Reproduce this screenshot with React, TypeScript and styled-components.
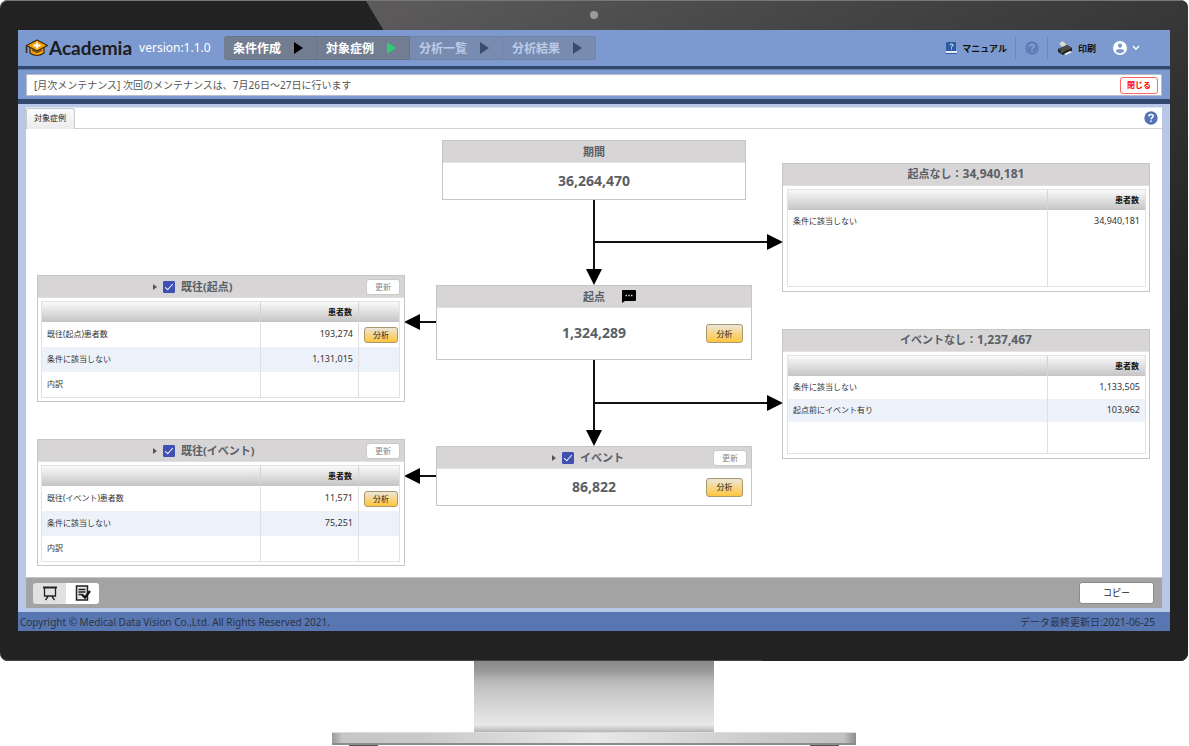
import React from "react";
import styled, { createGlobalStyle, css } from "styled-components";

const GlobalStyle = createGlobalStyle`
  *, *::before, *::after { box-sizing: border-box; }
  body {
    margin: 0;
    background: #fff;
    color: #333;
    font-family: "Noto Sans", "Noto Sans CJK JP", sans-serif;
    font-size: 10px;
    line-height: 1.2;
  }
  button, input { font-family: inherit; margin: 0; }
  button { cursor: pointer; padding: 0; }
  svg { display: block; flex: none; }
`;

/* ---------- monitor ---------- */

const Monitor = styled.div`
  min-width: 1160px;
  padding-right: 1px;
`;

const Bezel = styled.div`
  position: relative;
  padding: 30px 18px;
  border-radius: 8px;
  background: #222;
  overflow: hidden;
  box-shadow: inset 0 1px 0 #777, inset 0 -1px 0 #444;
`;

const Reflection = styled.div`
  position: absolute;
  inset: 1px 0 0 0;
  clip-path: polygon(366px 0, 100% 0, 100% 100%, 762px 100%);
  background: linear-gradient(
    to bottom right,
    #5c5a5a 17%,
    #504f4f 27%,
    #454444 37%,
    #383838 50%,
    #282828 66%,
    #222 74%
  );
`;

const Camera = styled.div`
  position: absolute;
  top: 11px;
  left: 50%;
  width: 8px;
  height: 8px;
  margin-left: -4px;
  border-radius: 50%;
  background: #9a9a9a;
`;

const Screen = styled.div`
  position: relative;
  display: flex;
  flex-direction: column;
  background: #b8c6e8;
`;

const Stand = styled.div`
  display: flex;
  flex-direction: column;
  align-items: center;
`;

const Neck = styled.div`
  width: 240px;
  height: 71px;
  background: linear-gradient(#888 0, #999 10px, #b8b8b8 20px, #c8c9c8 32px, #e8e8e8 64px, #b4b4b4 71px);
`;

const Base = styled.div`
  width: 524px;
  height: 13px;
  border-top: 1px solid #ddd;
  border-bottom: 2px solid #8c8c8c;
  background: linear-gradient(90deg, #999 0, #c6c6c6 10px, #c8c9c8 90px, #e8e8e8 50%, #c8c9c8 440px, #c2c2c2 512px, #8c8c8c 100%);
`;

const Feet = styled.div`
  display: flex;
  justify-content: space-between;
  width: 490px;
`;

const Foot = styled.div`
  width: 29px;
  height: 1px;
  background: #555;
`;

/* ---------- header ---------- */

const Header = styled.header`
  display: flex;
  align-items: center;
  height: 39px;
  padding: 0 22px 0 7px;
  border-bottom: 3px solid #33486d;
  background: #7c9ad0;
`;

const Logo = styled.a`
  display: flex;
  align-items: center;
  color: #1e1c20;
  font-family: Lato, sans-serif;
  font-size: 19px;
  font-weight: 700;
  line-height: 24px;
  text-decoration: none;
`;

const Version = styled.span`
  width: 92px;
  padding-left: 7px;
  color: #fff;
  font-size: 12px;
`;

const Steps = styled.nav`
  display: flex;
  height: 24px;
  border-radius: 3px;
  overflow: hidden;
`;

const Step = styled.button<{ $muted?: boolean }>`
  display: flex;
  align-items: center;
  gap: 13px;
  width: 93px;
  padding-left: 9px;
  border: 1px solid ${(p) => (p.$muted ? "#7183a9" : "#67748c")};
  border-left-width: 0;
  background: ${(p) => (p.$muted ? "#788bb1" : "#727d92")};
  color: ${(p) => (p.$muted ? "#bccbe8" : "#fff")};
  font-size: 12px;
  font-weight: 700;
  white-space: nowrap;
`;

const Tools = styled.div`
  display: flex;
  align-items: center;
  height: 22px;
  margin-left: auto;
`;

const Tool = styled.button<{ $divided?: boolean }>`
  display: flex;
  align-items: center;
  gap: 5px;
  height: 22px;
  padding: 0 8px 0 9px;
  border: 0;
  border-right: ${(p) => (p.$divided ? "1px solid #6c88be" : "0")};
  background: none;
  color: #111;
  font-size: 9px;
  font-weight: 700;
  white-space: nowrap;
`;

/* ---------- notice ---------- */

const NoticeBand = styled.div`
  padding: 4px 8px 3px;
  border-top: 1px solid #5c79ad;
  border-bottom: 5px solid #33486d;
  background: #7c9ad0;
`;

const Notice = styled.div`
  display: flex;
  align-items: center;
  justify-content: space-between;
  height: 22px;
  padding: 0 3px 0 7px;
  border: 1px solid #b9bccb;
  background: #fff;
  color: #555;
  font-size: 10px;
`;

const CloseButton = styled.button`
  width: 38px;
  height: 17px;
  padding-bottom: 2px;
  border: 1px solid #f66;
  border-radius: 3px;
  background: #fff;
  color: #f00;
  font-size: 8px;
  font-weight: 700;
`;

/* ---------- panel ---------- */

const Panel = styled.main`
  margin: 3px 8px 4px;
  border-top: 1px solid #dfe6f6;
  background: #fff;
`;

const TabBar = styled.div`
  display: flex;
  justify-content: space-between;
  height: 21px;
  padding-right: 4px;
  border-bottom: 1px solid #d2d2d2;
`;

const Tab = styled.button`
  width: 49px;
  height: 21px;
  padding: 0 1px 4px 0;
  border: 1px solid #c9c9c9;
  border-bottom: 0;
  border-radius: 3px 3px 0 0;
  background: linear-gradient(#fbfbfb, #ebebeb);
  color: #222;
  font-size: 8px;
`;

const IconButton = styled.button`
  display: flex;
  align-items: center;
  border: 0;
  background: none;
`;

const Canvas = styled.div`
  position: relative;
  height: 448px;
`;

type Side = "left" | "center" | "right";

const sideStyles = {
  left: css`
    left: 11px;
    width: 368px;
  `,
  center: css<{ $wide?: boolean }>`
    left: 50%;
    transform: translateX(-50%);
    width: ${(p) => (p.$wide ? 316 : 304)}px;
  `,
  right: css`
    right: 12px;
    width: 368px;
  `,
};

const Node = styled.section<{ $side: Side; $top: number; $height: number; $wide?: boolean }>`
  position: absolute;
  top: ${(p) => p.$top}px;
  height: ${(p) => p.$height}px;
  display: flex;
  flex-direction: column;
  border: 1px solid #c6c6c6;
  background: #fff;
  ${(p) => sideStyles[p.$side]}
`;

const titleText = css`
  height: 22px;
  flex: none;
  align-items: center;
  border-bottom: 1px solid #e2e2e2;
  background: #d7d5d6;
  color: #5a5f66;
  font-size: 11px;
  font-weight: 700;
  white-space: nowrap;
`;

const CenterTitle = styled.div`
  display: grid;
  grid-template-columns: 1fr auto 1fr;
  ${titleText}
  > :first-child { grid-column: 2; }
  svg { margin-left: 17px; }
`;

const Count = styled.span`
  font-size: 12px;
`;

const ToggleTitle = styled.div`
  display: flex;
  padding: 0 4px 0 115px;
  ${titleText}
`;

const ToggleLabel = styled.label`
  display: flex;
  align-items: center;
  gap: 6px;
  margin-left: 6px;
`;

const Checkbox = styled.input.attrs({ type: "checkbox" })`
  appearance: none;
  position: relative;
  width: 12px;
  height: 12px;
  border: 1px solid #3f51b5;
  border-radius: 1px;
  background: #fff;
  &:checked { background: #3f51b5; }
  &:checked::after {
    content: "";
    position: absolute;
    left: 3px;
    top: 0;
    width: 4px;
    height: 8px;
    border: solid #fff;
    border-width: 0 1px 1px 0;
    transform: rotate(42deg);
  }
`;

const UpdateButton = styled.button`
  width: 34px;
  height: 16px;
  margin-left: auto;
  border: 1px solid #c9c9c9;
  border-radius: 3px;
  background: #fff;
  color: #888;
  font-size: 8px;
`;

const Body = styled.div`
  flex: 1;
  display: grid;
  grid-template-columns: 1fr auto 1fr;
  align-items: center;
  padding: 0 8px;
`;

const Total = styled.strong`
  grid-column: 2;
  color: #5a5f66;
  font-size: 14px;
  font-weight: 700;
`;

const AnalyzeButton = styled.button<{ $small?: boolean }>`
  justify-self: end;
  width: ${(p) => (p.$small ? 34 : 37)}px;
  height: ${(p) => (p.$small ? 16 : 19)}px;
  border: 1px solid #a8986c;
  border-radius: 3px;
  background: linear-gradient(#ece6dc, #f7d587 50%, #ffc63e);
  color: #222;
  font-size: 8px;
  line-height: 12px;
`;

const TableWrap = styled.div<{ $side: "left" | "right" }>`
  flex: 1;
  display: flex;
  margin: ${(p) => (p.$side === "left" ? "3px 4px 4px 3px" : "3px 3px 4px 4px")};
  border: 1px solid #e2e2e2;
`;

const DataTable = styled.table`
  width: 100%;
  height: 100%;
  table-layout: fixed;
  border-spacing: 0;
  font-size: 8px;
`;

const HeadCell = styled.th<{ $width?: number }>`
  width: ${(p) => (p.$width ? `${p.$width}px` : "auto")};
  height: 20px;
  padding: 0 6px;
  background: linear-gradient(#fafafa, #c4c4c4);
  color: #111;
  text-align: right;
  & + & { border-left: 1px solid #d4d4d4; }
`;

const Row = styled.tr<{ $height?: number; $shaded?: boolean }>`
  height: ${(p) => (p.$height ? `${p.$height}px` : "auto")};
  background: ${(p) => (p.$shaded ? "#edf2fa" : "#fff")};
`;

const cellKinds = {
  label: css`
    padding: 0 5px 2px;
    font-size: 8px;
  `,
  number: css`
    padding: 0 5px 1px;
    font-size: 9px;
    text-align: right;
  `,
  action: css`
    padding: 0 1px 0 0;
    font-size: 8px;
    text-align: right;
  `,
};

const Cell = styled.td<{ $kind?: keyof typeof cellKinds }>`
  color: #333;
  ${(p) => cellKinds[p.$kind ?? "label"]}
  & + & { border-left: 1px solid #e0e0e0; }
`;

/* ---------- connectors ---------- */

const DownLink = styled.div<{ $top: number; $height: number }>`
  position: absolute;
  left: 50%;
  top: ${(p) => p.$top}px;
  height: ${(p) => p.$height}px;
  width: 16px;
  margin-left: -8px;
  display: flex;
  flex-direction: column;
  align-items: center;
`;

const SideLink = styled.div<{ $top: number; $to: "left" | "right" }>`
  position: absolute;
  top: ${(p) => p.$top}px;
  height: 16px;
  display: flex;
  align-items: center;
  ${(p) =>
    p.$to === "right"
      ? "left: 50%; right: 379px;"
      : "left: 378px; right: calc(50% + 158px);"}
`;

const Line = styled.i`
  flex: 1;
  min-width: 2px;
  min-height: 2px;
  background: #111;
  ${SideLink} & { height: 2px; flex: 1; }
`;

/* ---------- bottom bars ---------- */

const ActionBar = styled.div`
  display: flex;
  align-items: center;
  justify-content: space-between;
  height: 31px;
  padding: 0 8px 0 7px;
  border-top: 1px solid #c4c4c4;
  background: #a3a3a3;
`;

const ViewSwitch = styled.div`
  display: flex;
  border-radius: 3px;
  overflow: hidden;
`;

const ViewButton = styled.button<{ $active?: boolean }>`
  display: flex;
  align-items: center;
  justify-content: center;
  width: 33px;
  height: 21px;
  border: 0;
  background: ${(p) => (p.$active ? "#fff" : "#e1e1e1")};
`;

const CopyButton = styled.button`
  width: 75px;
  height: 22px;
  padding-bottom: 2px;
  border: 1px solid #8c8c8c;
  border-radius: 3px;
  background: #fff;
  color: #222;
  font-size: 9px;
`;

const Footer = styled.footer`
  display: flex;
  align-items: center;
  justify-content: space-between;
  height: 19px;
  padding: 0 15px 0 2px;
  background: #5877b2;
  color: #2c3444;
  font-size: 10px;
`;

/* ---------- icons ---------- */

const CapIcon = () => (
  <svg width="24" height="18" viewBox="0 0 24 18">
    <path d="M5 8v6q7 5 14 0V8z" fill="#f5a000" stroke="#3a2a1a" strokeWidth="1.2" />
    <path d="M12 1 1.500 6.500 12 12l10.500-5.500z" fill="#f5a000" stroke="#3a2a1a" strokeWidth="1.200" strokeLinejoin="round" />
    <path d="M1.500 6.500V14" stroke="#3a2a1a" strokeWidth="1.600" />
    <path d="M12 3.500v6M8.500 6.500h7" stroke="#fff" strokeWidth="2" />
    <path d="m7 11 5 2.500 5-2.500" stroke="#3a2a1a" strokeWidth="1" fill="none" />
  </svg>
);

const Triangle = ({ color }: { color: string }) => (
  <svg width="9" height="12" viewBox="0 0 9 12">
    <path d="M0 0v12l9-6z" fill={color} />
  </svg>
);

const ManualIcon = () => (
  <svg width="11" height="12" viewBox="0 0 11 12">
    <path d="M1 0h9v9H0V1z" fill="#2c5ba3" />
    <path d="M0 9h11v3H0z" fill="#e6edf8" />
    <path d="M0 11.500h11" stroke="#2c5ba3" />
    <path d="M4 3.200q0-1.200 1.500-1.200T7 3.300q0 .8-1.500 1.500v.7M5.500 6.500v1" stroke="#fff" fill="none" />
  </svg>
);

const HelpIcon = ({ disc, mark }: { disc: string; mark: string }) => (
  <svg width="14" height="14" viewBox="0 0 14 14">
    <circle cx="7" cy="7" r="6.700" fill={disc} />
    <path d="M4.800 5.400q0-2 2.200-2t2.200 1.900c0 1.300-2.200 1.500-2.200 3M7 9.500v1.500" stroke={mark} strokeWidth="1.500" fill="none" />
  </svg>
);

const PrinterIcon = () => (
  <svg width="16" height="15" viewBox="0 0 16 15">
    <path d="M2 2 6 0l5 5-5 3z" fill="#dcdcdc" stroke="#999" strokeWidth=".5" />
    <path d="M1 8 10 4l5 3v3L6 14l-5-3z" fill="#222" />
    <path d="m1 8 9-4 5 3-9 4z" fill="#4a4a4a" />
    <path d="m7 13 6-3 2 1-6 3z" fill="#eee" />
    <circle cx="5" cy="11" r=".7" fill="#6d6" />
  </svg>
);

const UserIcon = () => (
  <svg width="14" height="14" viewBox="0 0 13 13">
    <circle cx="6.500" cy="6.500" r="6.500" fill="#fff" />
    <circle cx="6.500" cy="4.300" r="2" fill="#7c9ad0" />
    <path d="M2.600 9.500q0-2 3.900-2t3.900 2q-1.400 1.900-3.900 1.900T2.600 9.500" fill="#7c9ad0" />
  </svg>
);

const ChevronIcon = () => (
  <svg width="8" height="6" viewBox="0 0 8 6">
    <path d="m1 1 3 3.200L7 1" stroke="#fff" strokeWidth="1.400" fill="none" />
  </svg>
);

const ExpandIcon = () => (
  <svg width="4" height="6" viewBox="0 0 4 6">
    <path d="M0 0v6l4-3z" fill="#555" />
  </svg>
);

const CommentIcon = () => (
  <svg width="14" height="13" viewBox="0 0 14 13">
    <path d="M1 0h12q1 0 1 1v9q0 1-1 1H3L0 13V1q0-1 1-1z" fill="#000" />
    <path d="M3.500 5.500H5M6.300 5.500h1.400M9 5.500h1.500" stroke="#ddd" strokeWidth="1.300" />
  </svg>
);

const ArrowHead = ({ to }: { to: "down" | "left" | "right" }) => {
  const d = { down: "M0 0h16L8 16z", left: "M16 0v16L0 8z", right: "M0 0v16l16-8z" }[to];
  return (
    <svg width="16" height="16" viewBox="0 0 16 16">
      <path d={d} fill="#000" />
    </svg>
  );
};

const BoardIcon = () => (
  <svg width="14" height="15" viewBox="0 0 14 15">
    <path d="M0 1.500h14" stroke="#222" strokeWidth="2" />
    <path d="M1.500 2v8h11V2M5 10.500 2.500 14M9 10.500l2.500 3.500" stroke="#222" strokeWidth="1.300" fill="none" />
  </svg>
);

const ReportIcon = () => (
  <svg width="16" height="16" viewBox="0 0 16 16">
    <path d="M1.500 1h11v14h-11z" fill="#e4e4e4" stroke="#222" strokeWidth="1.500" />
    <path d="M3.500 4.500h7M3.500 7h7M3.500 9.500h4" stroke="#222" strokeWidth="1.300" />
    <path d="m7 9.500 3 3L15 6" stroke="#111" strokeWidth="2.200" fill="none" />
  </svg>
);

/* ---------- parts ---------- */

type Entry = { label: string; value?: string; analyze?: boolean };

const HistoryNode = ({ top, name, entries }: { top: number; name: string; entries: Entry[] }) => (
  <Node $side="left" $top={top} $height={127}>
    <ToggleTitle>
      <ExpandIcon />
      <ToggleLabel>
        <Checkbox defaultChecked />
        {name}
      </ToggleLabel>
      <UpdateButton>更新</UpdateButton>
    </ToggleTitle>
    <TableWrap $side="left">
      <DataTable>
        <thead>
          <tr>
            <HeadCell />
            <HeadCell $width={98}>患者数</HeadCell>
            <HeadCell $width={41} />
          </tr>
        </thead>
        <tbody>
          {entries.map((e, i) => (
            <Row key={e.label} $height={25} $shaded={i % 2 === 1}>
              <Cell>{e.label}</Cell>
              <Cell $kind="number">{e.value}</Cell>
              <Cell $kind="action">{e.analyze && <AnalyzeButton $small>分析</AnalyzeButton>}</Cell>
            </Row>
          ))}
        </tbody>
      </DataTable>
    </TableWrap>
  </Node>
);

const ExcludedNode = (p: { top: number; height: number; name: string; count: string; entries: Entry[] }) => (
  <Node $side="right" $top={p.top} $height={p.height}>
    <CenterTitle>
      <span>
        {p.name}：<Count>{p.count}</Count>
      </span>
    </CenterTitle>
    <TableWrap $side="right">
      <DataTable>
        <thead>
          <tr>
            <HeadCell />
            <HeadCell $width={98}>患者数</HeadCell>
          </tr>
        </thead>
        <tbody>
          {p.entries.map((e, i) => (
            <Row key={e.label} $height={23} $shaded={i % 2 === 1}>
              <Cell>{e.label}</Cell>
              <Cell $kind="number">{e.value}</Cell>
            </Row>
          ))}
          <Row>
            <Cell />
            <Cell />
          </Row>
        </tbody>
      </DataTable>
    </TableWrap>
  </Node>
);

export default function App() {
  return (
    <>
      <GlobalStyle />
      <Monitor>
        <Bezel>
          <Reflection />
          <Camera />
          <Screen>
            <Header>
              <Logo href="#">
                <CapIcon />
                Academia
              </Logo>
              <Version>version:1.1.0</Version>
              <Steps>
                <Step>条件作成<Triangle color="#000" /></Step>
                <Step>対象症例<Triangle color="#2ecc71" /></Step>
                <Step $muted>分析一覧<Triangle color="#3b4c6c" /></Step>
                <Step $muted>分析結果<Triangle color="#3b4c6c" /></Step>
              </Steps>
              <Tools>
                <Tool $divided><ManualIcon />マニュアル</Tool>
                <Tool $divided aria-label="ヘルプ"><HelpIcon disc="#5f7db8" mark="#88a3d6" /></Tool>
                <Tool><PrinterIcon />印刷</Tool>
                <Tool aria-label="ユーザー"><UserIcon /><ChevronIcon /></Tool>
              </Tools>
            </Header>

            <NoticeBand>
              <Notice>
                <span>[月次メンテナンス] 次回のメンテナンスは、7月26日〜27日に行います</span>
                <CloseButton>閉じる</CloseButton>
              </Notice>
            </NoticeBand>

            <Panel>
              <TabBar>
                <Tab>対象症例</Tab>
                <IconButton aria-label="ヘルプ"><HelpIcon disc="#5573b5" mark="#fff" /></IconButton>
              </TabBar>

              <Canvas>
                <DownLink $top={70} $height={86}><Line /><ArrowHead to="down" /></DownLink>
                <DownLink $top={230} $height={87}><Line /><ArrowHead to="down" /></DownLink>
                <SideLink $top={105} $to="right"><Line /><ArrowHead to="right" /></SideLink>
                <SideLink $top={266} $to="right"><Line /><ArrowHead to="right" /></SideLink>
                <SideLink $top={185} $to="left"><ArrowHead to="left" /><Line /></SideLink>
                <SideLink $top={339} $to="left"><ArrowHead to="left" /><Line /></SideLink>

                <Node $side="center" $top={11} $height={60}>
                  <CenterTitle><span>期間</span></CenterTitle>
                  <Body><Total>36,264,470</Total></Body>
                </Node>

                <Node $side="center" $wide $top={156} $height={75}>
                  <CenterTitle><span>起点</span><CommentIcon /></CenterTitle>
                  <Body><Total>1,324,289</Total><AnalyzeButton>分析</AnalyzeButton></Body>
                </Node>

                <Node $side="center" $wide $top={317} $height={60}>
                  <ToggleTitle>
                    <ExpandIcon />
                    <ToggleLabel><Checkbox defaultChecked />イベント</ToggleLabel>
                    <UpdateButton>更新</UpdateButton>
                  </ToggleTitle>
                  <Body><Total>86,822</Total><AnalyzeButton>分析</AnalyzeButton></Body>
                </Node>

                <HistoryNode
                  top={146}
                  name="既往(起点)"
                  entries={[
                    { label: "既往(起点)患者数", value: "193,274", analyze: true },
                    { label: "条件に該当しない", value: "1,131,015" },
                    { label: "内訳" },
                  ]}
                />
                <HistoryNode
                  top={310}
                  name="既往(イベント)"
                  entries={[
                    { label: "既往(イベント)患者数", value: "11,571", analyze: true },
                    { label: "条件に該当しない", value: "75,251" },
                    { label: "内訳" },
                  ]}
                />
                <ExcludedNode
                  top={34}
                  height={129}
                  name="起点なし"
                  count="34,940,181"
                  entries={[{ label: "条件に該当しない", value: "34,940,181" }]}
                />
                <ExcludedNode
                  top={200}
                  height={130}
                  name="イベントなし"
                  count="1,237,467"
                  entries={[
                    { label: "条件に該当しない", value: "1,133,505" },
                    { label: "起点前にイベント有り", value: "103,962" },
                  ]}
                />
              </Canvas>

              <ActionBar>
                <ViewSwitch>
                  <ViewButton aria-label="フロー表示"><BoardIcon /></ViewButton>
                  <ViewButton $active aria-label="レポート表示"><ReportIcon /></ViewButton>
                </ViewSwitch>
                <CopyButton>コピー</CopyButton>
              </ActionBar>
            </Panel>

            <Footer>
              <span>Copyright © Medical Data Vision Co.,Ltd. All Rights Reserved 2021.</span>
              <span>データ最終更新日:2021-06-25</span>
            </Footer>
          </Screen>
        </Bezel>
        <Stand>
          <Neck />
          <Base />
          <Feet><Foot /><Foot /></Feet>
        </Stand>
      </Monitor>
    </>
  );
}
